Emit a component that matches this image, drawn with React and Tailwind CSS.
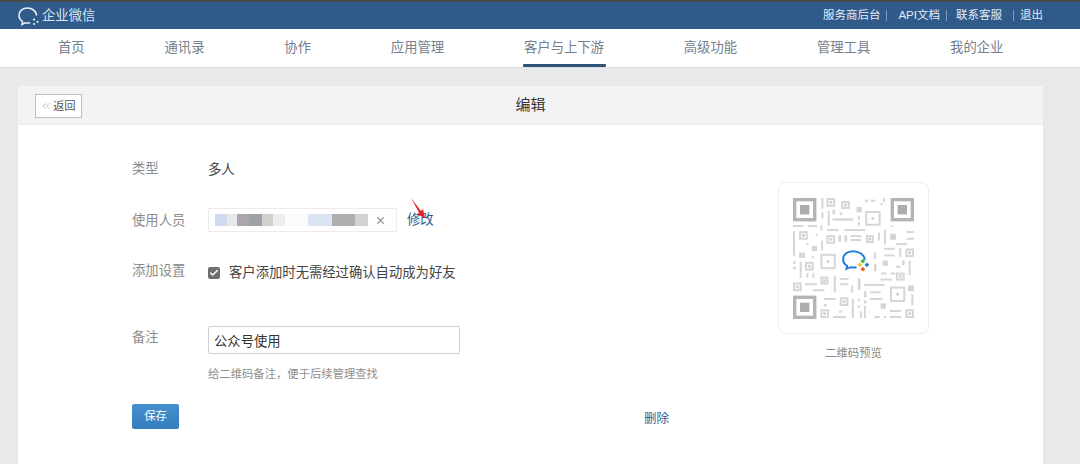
import { Check, ChevronsLeft, X } from "lucide-react";

const FONT = "[font-family:'Liberation_Sans','Noto_Sans_CJK_SC',sans-serif]";

const NAV_ITEMS = ["首页", "通讯录", "协作", "应用管理", "客户与上下游", "高级功能", "管理工具", "我的企业"];

// blurred-out member names: [width, colour]
const CHIP_BLOCKS = [
  [12, "#cfdcf0"], [10, "#e6e8ea"], [12, "#a9a7a9"], [13, "#9fa3a8"], [11, "#d0d0d0"], [12, "#eceeee"], [23, "#fbfbfb"],
  [24, "#dbe5f1"], [23, "#b0aeae"], [13, "#d2d2d2"],
];

// QR modules, in the coordinates of a 3x crop
const QR_BARS = [
  [153, 65, 6, 32], [153, 108, 6, 18], [172, 104, 6, 44], [186, 126, 62, 7], [186, 100, 8, 14], [208, 108, 8, 8],
  [258, 92, 16, 16], [262, 118, 6, 12], [262, 136, 6, 12], [284, 70, 8, 8], [300, 70, 14, 6], [338, 65, 6, 12], [330, 80, 6, 6],
  [68, 146, 30, 6], [112, 146, 28, 6], [150, 146, 6, 16], [170, 158, 34, 6], [222, 158, 62, 6], [360, 146, 6, 6],
  [68, 164, 6, 76], [136, 172, 6, 6], [108, 200, 6, 6], [124, 208, 16, 16], [152, 192, 6, 30], [204, 176, 8, 20], [222, 176, 8, 20],
  [240, 176, 32, 6], [240, 188, 32, 6], [322, 168, 6, 24], [340, 160, 6, 44], [408, 164, 22, 6], [408, 184, 22, 6], [376, 200, 34, 6],
  [340, 214, 32, 6], [340, 234, 32, 6], [386, 214, 6, 28], [86, 228, 18, 16], [124, 238, 6, 8], [68, 254, 8, 8], [68, 270, 8, 8],
  [88, 256, 6, 48], [108, 290, 6, 14], [126, 290, 6, 14], [310, 228, 6, 20], [310, 262, 8, 22], [336, 252, 16, 16], [376, 268, 14, 6],
  [394, 252, 8, 14], [414, 252, 6, 44], [332, 288, 16, 6], [360, 288, 14, 6], [330, 306, 34, 6], [104, 320, 36, 6], [128, 338, 34, 6],
  [190, 298, 6, 50], [208, 304, 26, 6], [208, 320, 26, 6], [242, 326, 6, 22], [262, 306, 8, 34], [280, 322, 62, 6], [280, 344, 8, 18],
  [298, 344, 32, 6], [298, 364, 38, 6], [280, 372, 8, 8], [412, 326, 18, 18], [422, 352, 6, 34], [160, 364, 36, 6], [160, 382, 8, 8],
  [244, 366, 6, 58], [262, 366, 6, 8], [262, 386, 6, 8], [280, 388, 6, 36], [330, 380, 16, 16], [358, 400, 34, 6], [358, 418, 34, 6],
  [188, 418, 38, 6], [206, 402, 8, 6], [312, 418, 16, 6], [340, 418, 6, 6], [268, 404, 6, 20],
];

const QR_RINGS = [
  [168, 65, 26, 26], [212, 74, 26, 24], [284, 104, 46, 44], [86, 164, 26, 26], [168, 176, 26, 26], [286, 176, 24, 24],
  [358, 172, 18, 18], [404, 216, 26, 26], [104, 256, 26, 26], [150, 232, 46, 46], [376, 288, 26, 24], [68, 318, 26, 26],
  [150, 300, 24, 24], [358, 330, 46, 46], [208, 362, 26, 26], [150, 398, 26, 26], [404, 398, 26, 26],
];

function QrFinder({ x, y }) {
  return (
    <g>
      <rect x={x + 5} y={y + 5} width="60" height="60" fill="none" stroke="#b4b4b4" strokeWidth="10" />
      <rect x={x + 21} y={y + 21} width="28" height="28" fill="#adadad" />
    </g>
  );
}

function QrCode() {
  return (
    <svg width="121" height="121" viewBox="68 65 362 362" className="block blur-[0.4px]">
      <QrFinder x={68} y={65} />
      <QrFinder x={360} y={65} />
      <QrFinder x={68} y={357} />
      {QR_BARS.map(([x, y, w, h], i) => (
        <rect key={i} x={x} y={y} width={w} height={h} fill="#d6d6d6" />
      ))}
      {QR_RINGS.map(([x, y, w, h], i) => (
        <g key={i}>
          <rect x={x + 3} y={y + 3} width={w - 6} height={h - 6} fill="none" stroke="#d6d6d6" strokeWidth="6" />
          <rect x={x + w / 2 - 4} y={y + h / 2 - 4} width="8" height="8" fill="#d0d0d0" />
        </g>
      ))}
      {/* logo in the middle */}
      <rect x="208" y="214" width="92" height="76" fill="#ffffff" />
      <path
        d="M283 250C281 234 266 224 248 224C229 224 218 235 218 249C218 258 223 264 230 268L228 277L240 272C246 273 252 273 258 272"
        fill="none"
        stroke="#1f7fe0"
        strokeWidth="6"
      />
      <path d="M268 258l7 7-7 7-7-7z" fill="#f4c22b" />
      <path d="M277 247l7 7-7 7-7-7z" fill="#3bb54a" />
      <path d="M289 258l7 7-7 7-7-7z" fill="#1f7fe0" />
      <path d="M277 271l7 7-7 7-7-7z" fill="#ef5a2a" />
    </svg>
  );
}

function Logo() {
  return (
    <svg width="22" height="20" viewBox="0 0 22 20" fill="none" className="mr-[2px]">
      <path
        d="M18.5 9C18 5 14 2 9.5 2C4.5 2 1 5.2 1 9.5C1 12 2.3 14 4.5 15.4L4 18.5L7.3 16.8C8.5 17 10 17.1 11.5 16.8"
        stroke="#e6eef5"
        strokeWidth="1.6"
        strokeLinecap="round"
      />
      <circle cx="16" cy="13.6" r="1.1" fill="#e6eef5" />
      <circle cx="19.5" cy="15.8" r="1.1" fill="#e6eef5" />
      <circle cx="16.2" cy="18" r="1.1" fill="#e6eef5" />
    </svg>
  );
}

function FormLabel({ children, className = "" }) {
  return <div className={`w-[76px] shrink-0 text-[13.33px] leading-5 text-[#8b8b8b] ${className}`}>{children}</div>;
}

export default function App() {
  return (
    <div className={`h-[464px] overflow-hidden bg-[#e8e9ea] ${FONT}`}>
      {/* top bar */}
      <header className="flex h-[29px] items-center justify-between border-t-2 border-[#4a4a4a] bg-[#2f5a8a] pl-[18px] pr-[37px]">
        <div className="flex items-center text-[13.33px] text-[#dbe5ee]">
          <Logo />
          <span>企业微信</span>
        </div>
        <nav className="flex items-center text-[11.5px] text-[#e4ebf2]">
          <span>服务商后台</span>
          <span className="ml-[6px] h-[11px] w-px bg-[#7f9bb9]" />
          <span className="ml-[11px]">API文档</span>
          <span className="ml-[6px] h-[11px] w-px bg-[#7f9bb9]" />
          <span className="ml-[9px]">联系客服</span>
          <span className="ml-[11px] h-[11px] w-px bg-[#7f9bb9]" />
          <span className="ml-[6px]">退出</span>
        </nav>
      </header>

      {/* main nav */}
      <nav className="box-content flex h-[38px] items-stretch gap-[79.85px] border-b border-[#dcdddf] bg-white pl-[58px]">
        {NAV_ITEMS.map((item, i) => (
          <div key={item} className="relative flex items-center text-[13.33px] text-[#74808f]">
            {item}
            {i === 4 && <span className="absolute -left-[1px] -right-[2px] bottom-0 h-[3px] rounded-[1px] bg-[#2f5379]" />}
          </div>
        ))}
      </nav>

      {/* card */}
      <main className="ml-[18px] mr-[37px] mt-[18px] h-[400px] rounded-t-[3px] bg-white">
        <div className="relative flex h-[39px] items-center justify-center rounded-t-[3px] border-b border-[#ebebeb] bg-[#f3f3f3]">
          <button className="absolute left-[17px] top-[8px] flex h-[24px] w-[47px] items-center gap-[1px] border border-[#bdbdbd] bg-white pl-[4px] text-[11.33px] text-[#555]">
            <ChevronsLeft size={12} strokeWidth={1.4} className="text-[#a0a0a0]" />
            返回
          </button>
          <h1 className="text-[15px] font-normal text-[#333]">编辑</h1>
        </div>

        <div className="flex pl-[114px]">
          {/* form */}
          <div className="w-[537px] pt-[34px]">
            <div className="flex h-5 items-center">
              <FormLabel>类型</FormLabel>
              <div className="pt-[1px] text-[13.33px] text-[#444]">多人</div>
            </div>

            <div className="mt-[29px] flex items-center">
              <FormLabel className="pt-[1px]">使用人员</FormLabel>
              <div className="flex h-[24px] w-[189px] items-center border border-[#ececec] pl-[6px] blur-[0.3px]">
                <div className="flex h-[12px]">
                  {CHIP_BLOCKS.map(([w, color], i) => (
                    <span key={i} className="h-full" style={{ width: w, backgroundColor: color }} />
                  ))}
                </div>
                <X size={11} strokeWidth={3} className="ml-[7px] text-[#9c9c9c]" />
              </div>
              <a className="relative ml-[10px] text-[13.33px] text-[#2d5f8f]">
                修改
                <svg width="18" height="24" viewBox="0 0 18 24" className="absolute -top-[13px] left-[3px]">
                  <path d="M1 1L11 14L13 12L15 21L7 17.5L9 15.5Z" fill="#e8212a" />
                </svg>
              </a>
            </div>

            <div className="mt-[29px] flex items-start">
              <FormLabel>添加设置</FormLabel>
              <div className="flex items-center pt-[2px]">
                <span className="flex h-[12px] w-[12px] items-center justify-center rounded-[2px] bg-[#6f6f6f]">
                  <Check size={10} strokeWidth={3.5} className="text-white" />
                </span>
                <span className="ml-[9px] text-[13.33px] leading-5 text-[#444]">客户添加时无需经过确认自动成为好友</span>
              </div>
            </div>

            <div className="mt-[44px] flex items-start">
              <FormLabel className="pt-[1px]">备注</FormLabel>
              <div>
                <input
                  readOnly
                  value="公众号使用"
                  className="-mt-[1px] block h-[28px] w-[252px] rounded-[2px] border border-[#cfcfcf] px-[5px] text-[13.33px] text-[#333] outline-none"
                />
                <p className="mt-[12px] text-[11.33px] leading-4 text-[#8f8f8f]">给二维码备注，便于后续管理查找</p>
              </div>
            </div>

            <div className="mt-[22px] flex items-center justify-between">
              <button className="flex h-[25px] w-[47px] items-center justify-center rounded-[2px] bg-gradient-to-b from-[#4690cf] to-[#337dbd] text-[11.33px] text-white">
                保存
              </button>
              <a className="mt-[6px] text-[12.5px] text-[#2d5f8f]">删除</a>
            </div>
          </div>

          {/* qr preview */}
          <aside className="ml-[109px] pt-[57px]">
            <div className="flex h-[152px] w-[151px] items-center justify-center rounded-[8px] border border-[#eeeeee]">
              <QrCode />
            </div>
            <p className="mt-[11px] text-center text-[11.33px] text-[#888]">二维码预览</p>
          </aside>
        </div>
      </main>
    </div>
  );
}
